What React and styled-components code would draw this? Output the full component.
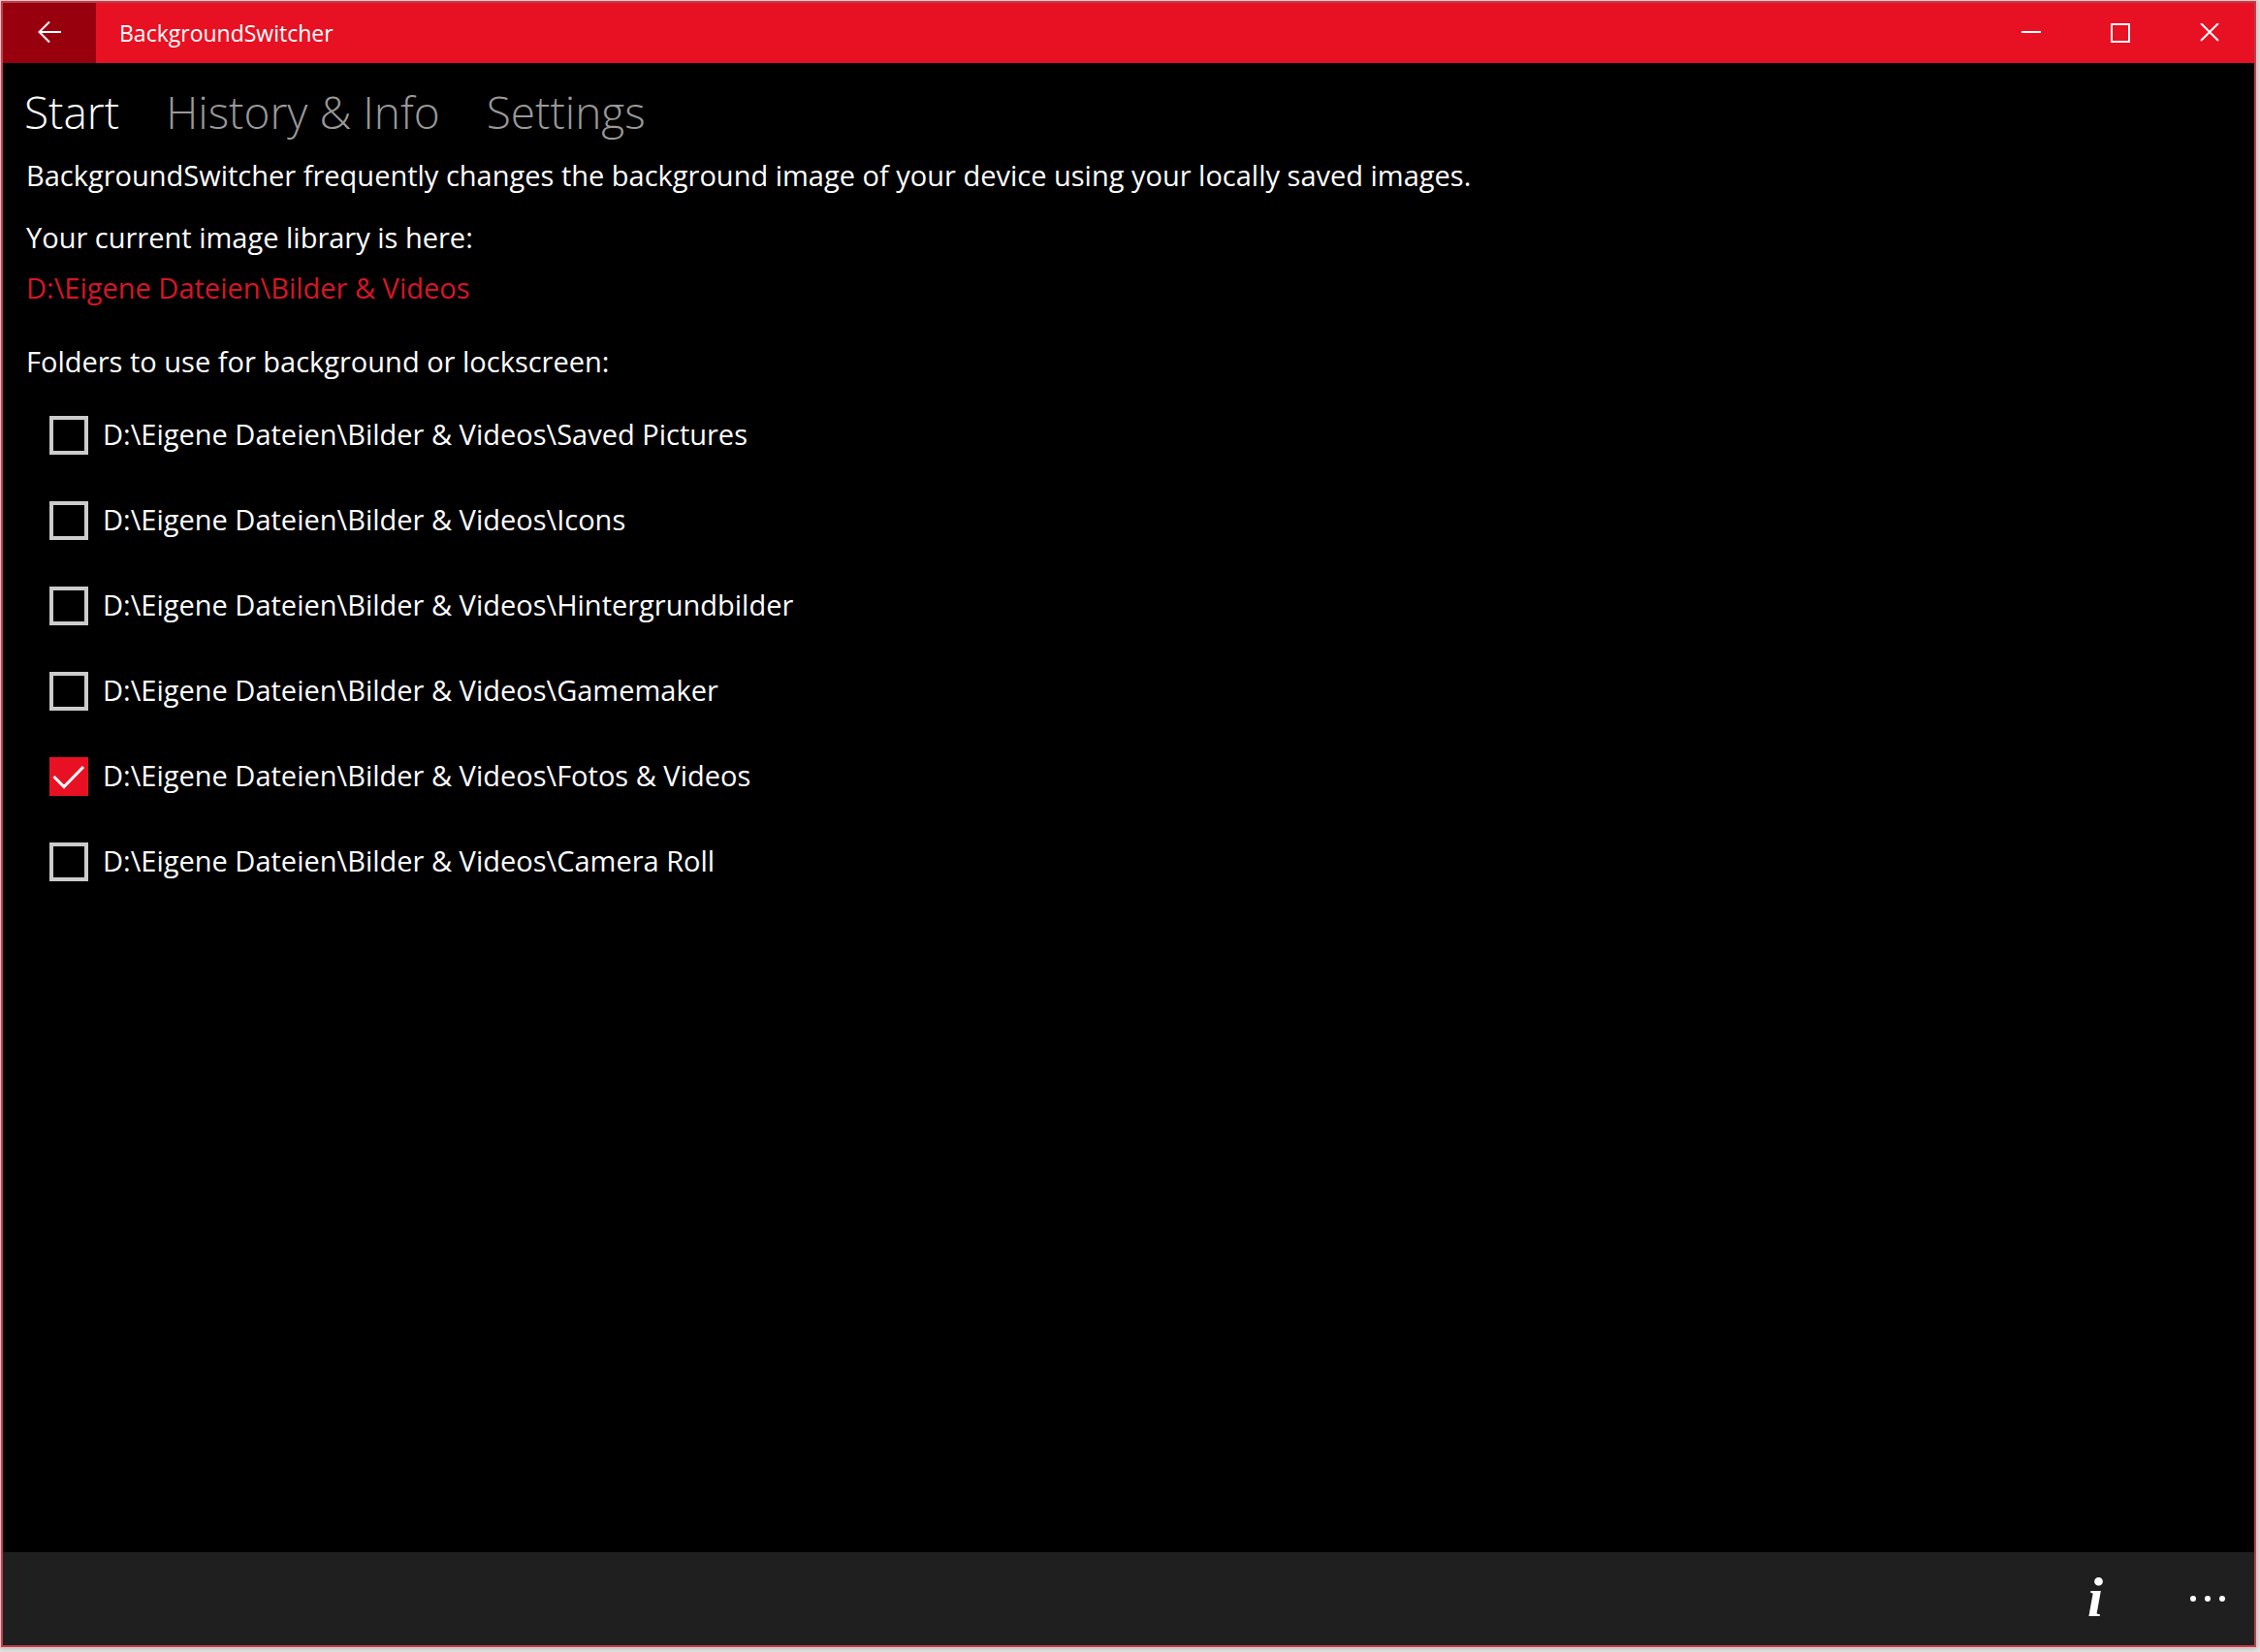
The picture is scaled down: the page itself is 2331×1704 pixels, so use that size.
import { useState } from "react";
import styled, { createGlobalStyle } from "styled-components";

const GlobalStyle = createGlobalStyle`
  * {
    box-sizing: border-box;
  }
  body {
    margin: 0;
    background: #e6e4e5;
    color: #fff;
    font-family: "Open Sans", "Noto Sans", sans-serif;
  }
  button,
  input {
    font: inherit;
    color: inherit;
    margin: 0;
  }
`;

const Desktop = styled.div`
  min-height: 100vh;
  display: flex;
  padding: 1px 4px 5px 1px;
`;

const Window = styled.div`
  flex: 1;
  display: flex;
  flex-direction: column;
  border: 2px solid #b5434d;
  background: #000;
  box-shadow: 0 0 0 1px #f3bfc4, 0 0 6px 1px rgba(0, 0, 0, 0.25);
`;

const TitleBar = styled.header`
  display: flex;
  align-items: stretch;
  height: 62px;
  background: #e81123;
`;

const BarButton = styled.button`
  display: flex;
  align-items: center;
  justify-content: center;
  width: ${(props) => props.$width || "92px"};
  padding: 0;
  border: none;
  background: ${(props) => props.$color || "transparent"};
  cursor: pointer;
`;

const AppName = styled.h1`
  flex: 1;
  margin: 0;
  padding-left: 24px;
  font-size: 23px;
  font-weight: 400;
  line-height: 62px;
`;

const Tabs = styled.nav`
  display: flex;
  gap: 48px;
  padding: 18px 22px 0;
`;

const Tab = styled.button`
  padding: 0;
  border: none;
  background: transparent;
  font-size: 46px;
  font-weight: 350;
  line-height: 64px;
  color: ${(props) => (props.$active ? "#fff" : "#999")};
  cursor: pointer;
`;

const Content = styled.main`
  flex: 1;
  padding: 12px 24px;
  font-size: 29px;
  line-height: 44px;
`;

const Text = styled.p`
  margin: 0 0 ${(props) => props.$gap || "0"};
`;

const LibraryLink = styled.a`
  color: #d71526;
  text-decoration: none;
`;

const FolderList = styled.ul`
  margin: 0;
  padding: 10px 24px;
  list-style: none;
`;

const Folder = styled.li`
  display: flex;
  align-items: center;
  height: 88px;
`;

const FolderLabel = styled.label`
  display: flex;
  align-items: center;
  gap: 15px;
  cursor: pointer;
`;

const FolderPath = styled.span`
  padding-bottom: 2px;
`;

const CheckWrap = styled.span`
  display: grid;
  width: 40px;
  height: 40px;

  > * {
    grid-area: 1 / 1;
  }
`;

const Checkbox = styled.input`
  appearance: none;
  width: 40px;
  height: 40px;
  border: 4px solid #ccc;

  &:checked {
    border-color: #e81123;
    background: #e81123;
  }
`;

const CheckMark = styled.svg`
  pointer-events: none;
`;

const CommandBar = styled.footer`
  display: flex;
  justify-content: flex-end;
  height: 96px;
  background: #1f1f1f;
`;

const InfoIcon = styled.span`
  padding-bottom: 2px;
  font-family: "Liberation Serif", serif;
  font-size: 58px;
  font-style: italic;
  font-weight: 700;
  line-height: 60px;
`;

const folders = [
  "Saved Pictures",
  "Icons",
  "Hintergrundbilder",
  "Gamemaker",
  "Fotos & Videos",
  "Camera Roll",
];

const tabs = ["Start", "History & Info", "Settings"];

const library = "D:\\Eigene Dateien\\Bilder & Videos";

const App = () => {
  const [active, setActive] = useState("Start");
  const [selected, setSelected] = useState(["Fotos & Videos"]);

  const toggle = (name) => {
    setSelected((prev) =>
      prev.includes(name) ? prev.filter((n) => n !== name) : [...prev, name]
    );
  };

  return (
    <Desktop>
      <GlobalStyle />
      <Window>
        <TitleBar>
          <BarButton $width="96px" $color="#99000d" aria-label="Back">
            <svg width="24" height="24" viewBox="0 0 24 24" fill="none" stroke="#fff" strokeWidth="2">
              <path d="M24 11H1.500M12 0.500L1.500 11L12 21.500" />
            </svg>
          </BarButton>
          <AppName>BackgroundSwitcher</AppName>
          <BarButton aria-label="Minimize">
            <svg width="20" height="20" viewBox="0 0 20 20" stroke="#fff" strokeWidth="2">
              <path d="M0 9H20" />
            </svg>
          </BarButton>
          <BarButton aria-label="Maximize">
            <svg width="20" height="20" viewBox="0 1 20 20" fill="none" stroke="#fff" strokeWidth="2">
              <path d="M1 2H19V20H1Z" />
            </svg>
          </BarButton>
          <BarButton aria-label="Close">
            <svg width="20" height="20" viewBox="0 0 20 20" stroke="#fff" strokeWidth="2">
              <path d="M1 0L19 18M19 0L1 18" />
            </svg>
          </BarButton>
        </TitleBar>

        <Tabs>
          {tabs.map((tab) => (
            <Tab key={tab} $active={tab === active} onClick={() => setActive(tab)}>
              {tab}
            </Tab>
          ))}
        </Tabs>

        <Content>
          <Text $gap="20px">
            BackgroundSwitcher frequently changes the background image of your device using your
            locally saved images.
          </Text>
          <Text $gap="8px">Your current image library is here:</Text>
          <Text $gap="32px">
            <LibraryLink href="#library">{library}</LibraryLink>
          </Text>
          <Text>Folders to use for background or lockscreen:</Text>
          <FolderList>
            {folders.map((name) => (
              <Folder key={name}>
                <FolderLabel>
                  <CheckWrap>
                    <Checkbox
                      type="checkbox"
                      checked={selected.includes(name)}
                      onChange={() => toggle(name)}
                    />
                    {selected.includes(name) && (
                      <CheckMark width="40" height="40" viewBox="0 0 40 40" fill="none" stroke="#fff" strokeWidth="3">
                        <path d="M4.500 20L15 30.500L35 10" />
                      </CheckMark>
                    )}
                  </CheckWrap>
                  <FolderPath>
                    {library}\{name}
                  </FolderPath>
                </FolderLabel>
              </Folder>
            ))}
          </FolderList>
        </Content>

        <CommandBar>
          <BarButton $width="136px" aria-label="Info">
            <InfoIcon>i</InfoIcon>
          </BarButton>
          <BarButton $width="96px" aria-label="More">
            <svg width="36" height="6" viewBox="0 0 36 6" fill="#fff">
              <circle cx="3" cy="3" r="3" />
              <circle cx="18" cy="3" r="3" />
              <circle cx="33" cy="3" r="3" />
            </svg>
          </BarButton>
        </CommandBar>
      </Window>
    </Desktop>
  );
};

export default App;
